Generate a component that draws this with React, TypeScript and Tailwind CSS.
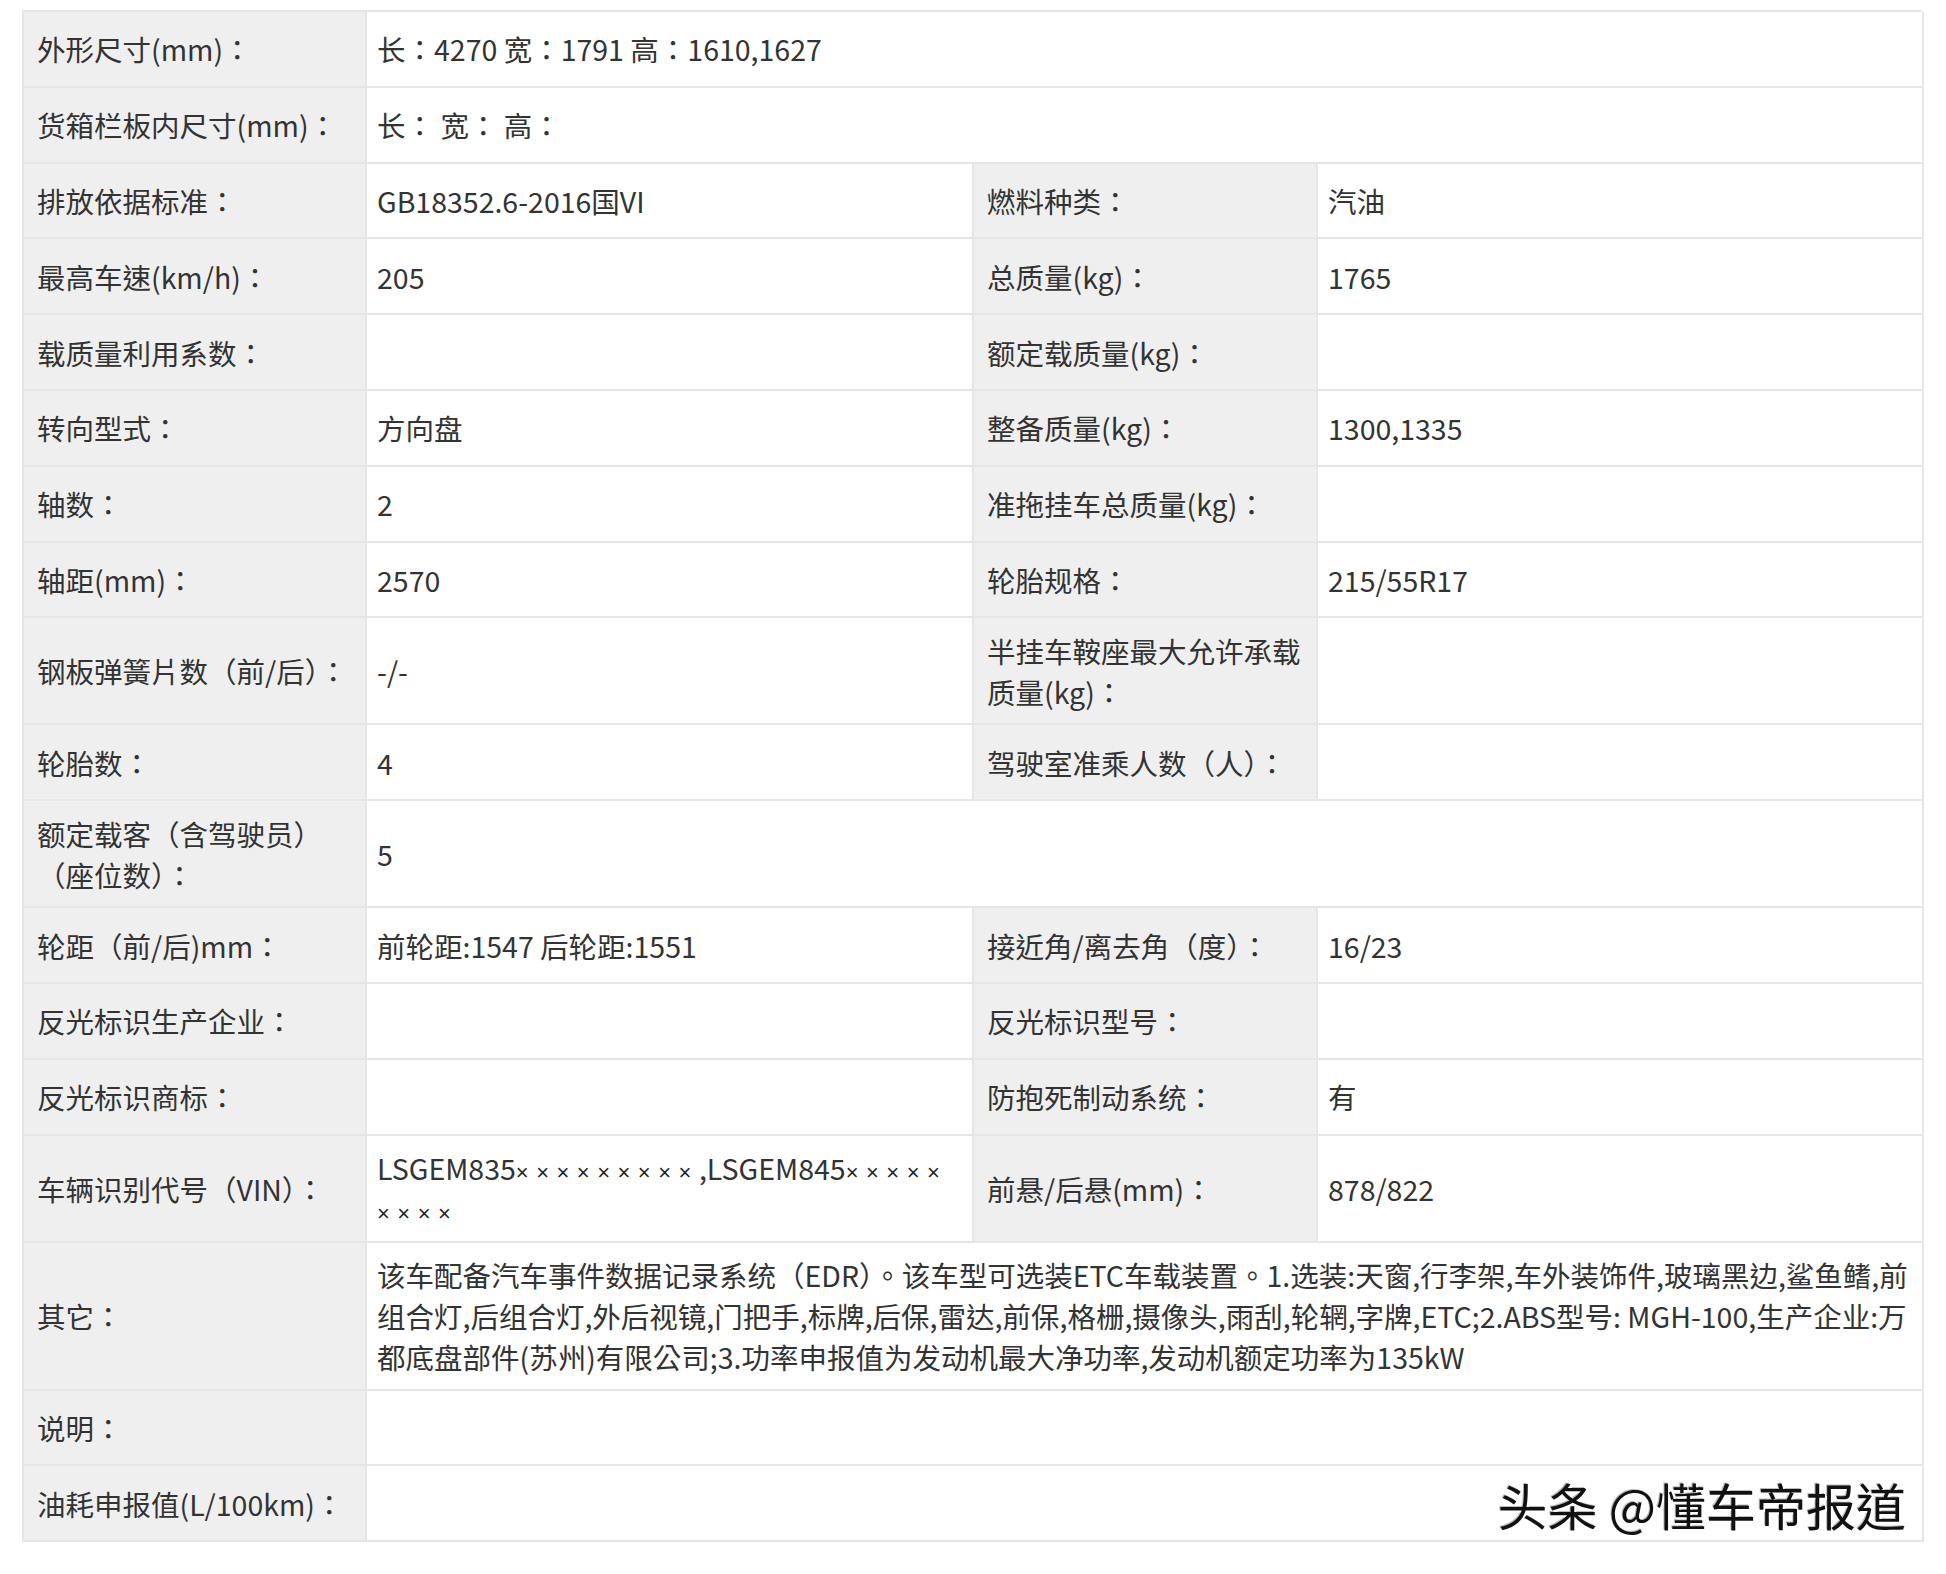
import React from 'react';

type Cell = { label: string; value?: React.ReactNode };
type Row = Cell[]; // 1 cell = spans full width, 2 cells = two pairs

// the × marks are narrow latin glyphs in the screenshot
const Vin = ({ text }: { text: string }) => (
  <span>
    {text.split(/(×+)/).map((part, i) =>
      part.startsWith('×') ? (
        <span key={i} className="font-['Liberation_Sans',sans-serif] text-[22px] leading-[20px] tracking-[7.5px] text-[#222222]">
          {part}
        </span>
      ) : (
        <React.Fragment key={i}>{part}</React.Fragment>
      )
    )}
  </span>
);

const rows: Row[] = [
  [{ label: '外形尺寸(mm)：', value: '长：4270 宽：1791 高：1610,1627' }],
  [{ label: '货箱栏板内尺寸(mm)：', value: '长：  宽：  高：' }],
  [
    { label: '排放依据标准：', value: 'GB18352.6-2016国VI' },
    { label: '燃料种类：', value: '汽油' },
  ],
  [
    { label: '最高车速(km/h)：', value: '205' },
    { label: '总质量(kg)：', value: '1765' },
  ],
  [
    { label: '载质量利用系数：', value: '' },
    { label: '额定载质量(kg)：', value: '' },
  ],
  [
    { label: '转向型式：', value: '方向盘' },
    { label: '整备质量(kg)：', value: '1300,1335' },
  ],
  [
    { label: '轴数：', value: '2' },
    { label: '准拖挂车总质量(kg)：', value: '' },
  ],
  [
    { label: '轴距(mm)：', value: '2570' },
    { label: '轮胎规格：', value: '215/55R17' },
  ],
  [
    { label: '钢板弹簧片数（前/后）：', value: '-/-' },
    { label: '半挂车鞍座最大允许承载质量(kg)：', value: '' },
  ],
  [
    { label: '轮胎数：', value: '4' },
    { label: '驾驶室准乘人数（人）：', value: '' },
  ],
  [{ label: '额定载客（含驾驶员）（座位数）：', value: '5' }],
  [
    { label: '轮距（前/后)mm：', value: '前轮距:1547 后轮距:1551' },
    { label: '接近角/离去角（度）：', value: '16/23' },
  ],
  [
    { label: '反光标识生产企业：', value: '' },
    { label: '反光标识型号：', value: '' },
  ],
  [
    { label: '反光标识商标：', value: '' },
    { label: '防抱死制动系统：', value: '有' },
  ],
  [
    { label: '车辆识别代号（VIN）：', value: <Vin text="LSGEM835×××××××××,LSGEM845×××××××××" /> },
    { label: '前悬/后悬(mm)：', value: '878/822' },
  ],
  [
    {
      label: '其它：',
      value:
        '该车配备汽车事件数据记录系统（EDR）。该车型可选装ETC车载装置。1.选装:天窗,行李架,车外装饰件,玻璃黑边,鲨鱼鳍,前组合灯,后组合灯,外后视镜,门把手,标牌,后保,雷达,前保,格栅,摄像头,雨刮,轮辋,字牌,ETC;2.ABS型号: MGH-100,生产企业:万都底盘部件(苏州)有限公司;3.功率申报值为发动机最大净功率,发动机额定功率为135kW',
    },
  ],
  [{ label: '说明：', value: '' }],
  [{ label: '油耗申报值(L/100km)：', value: '' }],
];

const labelCls =
  'flex items-center min-h-[75.8px] py-[11.5px] pl-[13px] pr-[6px] bg-[#efefef] border-r-2 border-b-2 border-[#e6e6e6] break-all';
const valueCls =
  'flex items-center min-h-[75.8px] py-[11.5px] pl-[10px] pr-[8px] bg-white border-r-2 border-b-2 border-[#e6e6e6] break-all';

const App = () => {
  return (
    <div className="w-[1946px] min-h-[1574px] bg-white pt-[10px] pl-[22px]">
      <div
        className="relative w-[1900px] grid grid-cols-[343px_607px_344px_606px] border-t-2 border-l-2 border-[#e6e6e6] text-[#333333] text-[28.5px] leading-[41px]"
        style={{ fontFamily: '"Noto Sans CJK TC", "Noto Sans CJK SC", sans-serif' }}
      >
        {rows.map((row, i) =>
          row.length === 1 ? (
            <React.Fragment key={i}>
              <div className={labelCls}>{row[0].label}</div>
              <div className={`${valueCls} col-span-3`}>{row[0].value}</div>
            </React.Fragment>
          ) : (
            <React.Fragment key={i}>
              <div className={labelCls}>{row[0].label}</div>
              <div className={valueCls}>{row[0].value}</div>
              <div className={labelCls}>{row[1].label}</div>
              <div className={valueCls}>{row[1].value}</div>
            </React.Fragment>
          )
        )}

        {/* watermark over the last row */}
        <div className="absolute right-[16px] bottom-[8px] text-[50px] leading-[60px] text-[#111111] [text-shadow:2px_2px_0_#ffffff,-1px_-1px_0_#bbbbbb]">
          头条 @懂车帝报道
        </div>
      </div>
    </div>
  );
};

export default App;
